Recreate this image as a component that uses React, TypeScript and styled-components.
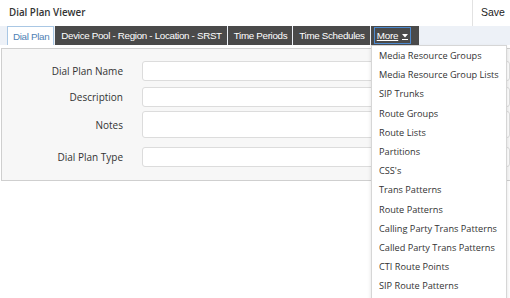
import styled, { createGlobalStyle } from 'styled-components'

const GlobalStyle = createGlobalStyle`
  html, body {
    margin: 0;
    padding: 0;
    background: #fff;
  }
  body {
    width: 510px;
    height: 298px;
    overflow: hidden;
    font-family: "Open Sans", "Liberation Sans", sans-serif;
    color: #333;
  }
`

const Page = styled.div`
  position: relative;
  width: 510px;
  height: 298px;
`

const Header = styled.div`
  display: flex;
  align-items: stretch;
  height: 26px;
`

const Title = styled.div`
  flex: 1;
  display: flex;
  align-items: center;
  padding: 0 0 2px 9px;
  font-size: 9.8px;
  font-weight: 600;
  color: #333;
`

const SaveButton = styled.button`
  width: 38px;
  border: none;
  border-left: 1px solid #e2e2e2;
  background: #fff;
  padding: 0 0 2px 8px;
  text-align: left;
  font-family: "Liberation Sans", Arial, sans-serif;
  font-size: 10.5px;
  color: #222;
`

const TabBar = styled.div`
  display: flex;
  align-items: stretch;
  height: 19px;
  padding-left: 7px;
  background: #edf1f7;
`

const Tab = styled.div<{ $active?: boolean }>`
  display: flex;
  align-items: center;
  padding: 0 4px 0 5px;
  margin-right: 1px;
  box-sizing: border-box;
  font-family: "Liberation Sans", Arial, sans-serif;
  font-size: 9.8px;
  letter-spacing: -0.32px;
  white-space: nowrap;
  color: ${({ $active }) => ($active ? '#4f7fb4' : '#fff')};
  background: ${({ $active }) => ($active ? '#fff' : '#4a4a4a')};
  border: 1px solid ${({ $active }) => ($active ? '#a9c7e4' : '#4a4a4a')};
  border-bottom: ${({ $active }) => ($active ? 'none' : '1px solid #4a4a4a')};
`

const MoreTab = styled.div`
  display: flex;
  align-items: center;
  padding: 0 8px 0 3px;
  background: #4a4a4a;
`

const MoreLabel = styled.span`
  display: flex;
  align-items: center;
  gap: 4px;
  height: 17px;
  padding: 0 2px;
  border: 1px solid #4d8ad0;
  box-sizing: border-box;
  font-family: "Liberation Sans", Arial, sans-serif;
  font-size: 9.8px;
  letter-spacing: -0.2px;
  color: #fff;
  text-decoration: underline;
`

const Caret = styled.svg`
  border-bottom: 1px solid #fff;
  padding-bottom: 1px;
  margin-top: 3px;
`

const Panel = styled.div`
  margin: 3px 0 0 1px;
  height: 133px;
  background: #f7f7f7;
  border: 1px solid #cfcfcf;
  border-right: none;
  padding-top: 12px;
  box-sizing: border-box;
  display: flex;
  flex-direction: column;
  gap: 6px;
`

const Row = styled.div<{ $tall?: boolean }>`
  display: grid;
  grid-template-columns: 121px 1fr;
  column-gap: 19px;
  align-items: center;
  margin: ${({ $tall }) => ($tall ? '-2px 0 3px' : '0')};
`

const Label = styled.label`
  text-align: right;
  font-size: 10px;
  color: #333;
`

const Input = styled.div<{ $tall?: boolean }>`
  height: ${({ $tall }) => ($tall ? '27px' : '20px')};
  background: #fff;
  border: 1px solid #dcdcdc;
  border-radius: 3px;
  box-sizing: border-box;
`

const Dropdown = styled.ul`
  position: absolute;
  left: 371px;
  top: 45px;
  width: 136px;
  height: 260px;
  margin: 0;
  padding: 0;
  list-style: none;
  background: #fff;
  border: 1px solid #d6d6d6;
  box-shadow: 0 2px 4px rgba(0, 0, 0, 0.12);
  box-sizing: border-box;
`

const DropItem = styled.li`
  height: 19.2px;
  line-height: 19.2px;
  padding-left: 7px;
  font-size: 9.2px;
  color: #333;
  white-space: nowrap;
`

const fields = [
  { label: 'Dial Plan Name' },
  { label: 'Description' },
  { label: 'Notes', tall: true },
  { label: 'Dial Plan Type' },
]

const menu = [
  'Media Resource Groups',
  'Media Resource Group Lists',
  'SIP Trunks',
  'Route Groups',
  'Route Lists',
  'Partitions',
  "CSS's",
  'Trans Patterns',
  'Route Patterns',
  'Calling Party Trans Patterns',
  'Called Party Trans Patterns',
  'CTI Route Points',
  'SIP Route Patterns',
]

export default function App() {
  return (
    <Page>
      <GlobalStyle />
      <Header>
        <Title>Dial Plan Viewer</Title>
        <SaveButton>Save</SaveButton>
      </Header>
      <TabBar>
        <Tab $active>Dial Plan</Tab>
        <Tab>Device Pool - Region - Location - SRST</Tab>
        <Tab>Time Periods</Tab>
        <Tab>Time Schedules</Tab>
        <MoreTab>
          <MoreLabel>
            More
            <Caret width="6" height="4" viewBox="0 0 6 4">
              <path d="M0 0h6L3 3.5z" fill="#fff" />
            </Caret>
          </MoreLabel>
        </MoreTab>
      </TabBar>
      <Panel>
        {fields.map((f) => (
          <Row key={f.label} $tall={f.tall}>
            <Label>{f.label}</Label>
            <Input $tall={f.tall} />
          </Row>
        ))}
      </Panel>
      <Dropdown>
        {menu.map((m) => (
          <DropItem key={m}>{m}</DropItem>
        ))}
      </Dropdown>
    </Page>
  )
}
